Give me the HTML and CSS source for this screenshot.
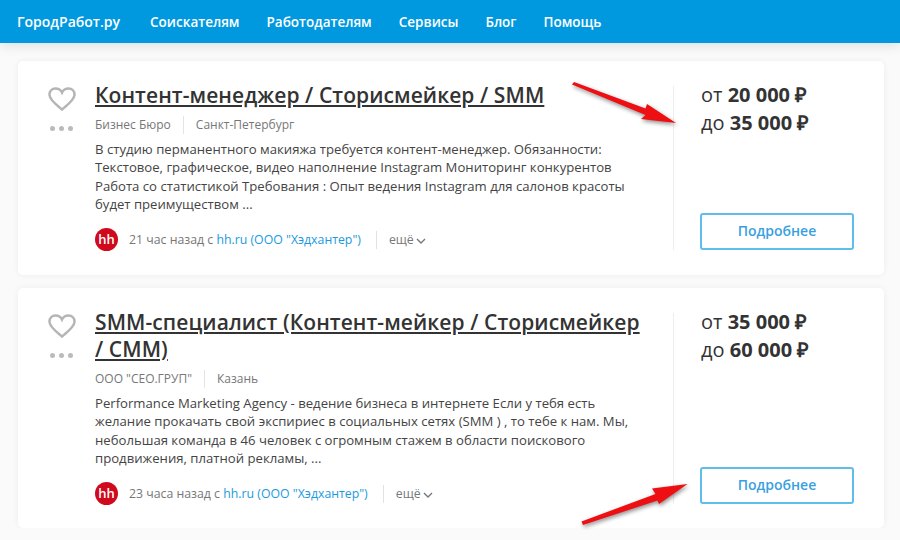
FILE: index.html
```html
<!DOCTYPE html>
<html lang="ru">
<head>
    <meta charset="UTF-8">
    <title>ГородРабот.ру</title>
    <link rel="stylesheet" href="styles.css">
</head>
<body>
    <header class="topbar">
        <a class="logo" href="#">ГородРабот.ру</a>
        <nav class="nav">
            <a href="#">Соискателям</a>
            <a href="#">Работодателям</a>
            <a href="#">Сервисы</a>
            <a href="#">Блог</a>
            <a href="#">Помощь</a>
        </nav>
    </header>

    <main class="list">
        <article class="card card-first">
            <div class="side">
                <svg class="heart" viewBox="0 0 28 24"><path d="M14 22.5C9 18 2 13.500 1.500 8 1.200 4 4 1.500 7.500 1.500 10.300 1.500 12.800 3 14 5.500 15.200 3 17.700 1.500 20.500 1.500 24 1.500 26.800 4 26.500 8 26 13.500 19 18 14 22.500Z"/></svg>
                <div class="dots"><i></i><i></i><i></i></div>
            </div>
            <div class="body">
                <h2 class="title"><a href="#">Контент-менеджер / Сторисмейкер / SMM</a></h2>
                <div class="meta"><span>Бизнес Бюро</span><span>Санкт-Петербург</span></div>
                <p class="desc">В студию перманентного макияжа требуется контент-менеджер. Обязанности: Текстовое, графическое, видео наполнение Instagram Мониторинг конкурентов Работа со статистикой Требования : Опыт ведения Instagram для салонов красоты будет преимуществом ...</p>
                <div class="source">
                    <span class="hh">hh</span>
                    <span class="ago">21 час назад с <a href="#">hh.ru (ООО "Хэдхантер")</a></span>
                    <span class="more">ещё <svg viewBox="0 0 10 6"><path d="M1 1l4 4 4-4"/></svg></span>
                </div>
            </div>
            <div class="aside">
                <div class="price">
                    <div>от <b>20 000 ₽</b></div>
                    <div>до <b>35 000 ₽</b></div>
                </div>
                <a class="btn" href="#">Подробнее</a>
            </div>
        </article>

        <article class="card card-second">
            <div class="side">
                <svg class="heart" viewBox="0 0 28 24"><path d="M14 22.5C9 18 2 13.500 1.500 8 1.200 4 4 1.500 7.500 1.500 10.300 1.500 12.800 3 14 5.500 15.200 3 17.700 1.500 20.500 1.500 24 1.500 26.800 4 26.500 8 26 13.500 19 18 14 22.500Z"/></svg>
                <div class="dots"><i></i><i></i><i></i></div>
            </div>
            <div class="body">
                <h2 class="title"><a href="#">SMM-специалист (Контент-мейкер / Сторисмейкер / СММ)</a></h2>
                <div class="meta"><span>ООО "СЕО.ГРУП"</span><span>Казань</span></div>
                <p class="desc">Performance Marketing Agency - ведение бизнеса в интернете Если у тебя есть желание прокачать свой экспириес в социальных сетях (SMM ) , то тебе к нам. Мы, небольшая команда в 46 человек с огромным стажем в области поискового продвижения, платной рекламы, ...</p>
                <div class="source">
                    <span class="hh">hh</span>
                    <span class="ago">23 часа назад с <a href="#">hh.ru (ООО "Хэдхантер")</a></span>
                    <span class="more">ещё <svg viewBox="0 0 10 6"><path d="M1 1l4 4 4-4"/></svg></span>
                </div>
            </div>
            <div class="aside">
                <div class="price">
                    <div>от <b>35 000 ₽</b></div>
                    <div>до <b>60 000 ₽</b></div>
                </div>
                <a class="btn" href="#">Подробнее</a>
            </div>
        </article>
    </main>

    <!-- red arrows drawn over the screenshot -->
    <svg class="arrow arrow-top" viewBox="0 0 110 50"><path d="M1 2.500 L3 0 L74.500 26.500 L76 22 L105 41 L70 37 L74.500 33Z"/></svg>
    <svg class="arrow arrow-bottom" viewBox="0 0 110 50"><path d="M0.500 41.500 L2 45 L76.500 20.500 L78 24 L106.500 4 L71 8.500 L74.500 14Z"/></svg>
</body>
</html>
```

FILE: styles.css
```css
* {
    box-sizing: border-box;
}
body {
    margin: 0;
    background-color: #fafafa;
    font-family: "Open Sans", sans-serif;
    color: #333;
    overflow: hidden;
}
a {
    text-decoration: none;
}
.topbar {
    height: 43px;
    display: flex;
    align-items: center;
    padding-left: 17px;
    background-color: #0099df;
    box-shadow: 0 2px 12px rgba(0, 0, 0, 0.12);
}
.logo,
.nav a {
    color: #fff;
    font-size: 13.500px;
    font-weight: 600;
}
.logo {
    margin-right: 30px;
    font-size: 14px;
}
.nav {
    display: flex;
    gap: 27px;
}
.list {
    padding: 18px 16px 0 18px;
    display: flex;
    flex-direction: column;
    gap: 13px;
}
.card {
    display: flex;
    background-color: #fff;
    border-radius: 5px;
    box-shadow: 0 0 6px rgba(0, 0, 0, 0.06);
    padding-top: 20px;
}
.card-first {
    height: 214px;
}
.card-second {
    height: 240px;
}
.side {
    width: 77px;
    flex-shrink: 0;
    padding: 6px 0 0 30px;
}
.heart {
    display: block;
    width: 28px;
    height: 24px;
    fill: none;
    stroke: #b5b5b5;
    stroke-width: 2.500;
}
.dots {
    display: flex;
    gap: 4px;
    margin: 15px 0 0 2px;
}
.dots i {
    width: 5px;
    height: 5px;
    border-radius: 50%;
    background-color: #bbb;
}
.body {
    width: 578px;
    flex-shrink: 0;
    padding-right: 32px;
}
.title {
    margin: 1px 0 0;
    font-size: 21px;
    font-weight: 600;
    line-height: 27px;
    letter-spacing: 0.080px;
}
.title a {
    color: #333;
    text-decoration: underline;
}
.meta {
    display: flex;
    margin-top: 7px;
    font-size: 12px;
    line-height: 18px;
    color: #777;
}
.meta span + span {
    margin-left: 12px;
    padding-left: 12px;
    border-left: 1px solid #e4e4e4;
}
.desc {
    margin: 6px 0 0;
    font-size: 13.150px;
    line-height: 18.300px;
    color: #444;
}
.source {
    display: flex;
    align-items: center;
    margin-top: 15px;
    font-size: 12.300px;
    color: #777;
}
.hh {
    width: 23px;
    height: 23px;
    margin-right: 11px;
    border-radius: 50%;
    background-color: #d0091c;
    color: #fff;
    font-size: 13px;
    font-weight: 600;
    line-height: 22px;
    text-align: center;
}
.ago a {
    color: #1a9ae0;
}
.more {
    display: flex;
    align-items: center;
    gap: 2px;
    margin-left: 15px;
    padding-left: 12px;
    border-left: 1px solid #dde3e8;
    line-height: 18px;
}
.more svg {
    width: 10px;
    height: 6px;
    margin-top: 2px;
    fill: none;
    stroke: #777;
    stroke-width: 1.400;
}
.aside {
    flex-grow: 1;
    height: 164px;
    margin-top: 5px;
    padding: 0 30px 0 26px;
    display: flex;
    flex-direction: column;
    justify-content: space-between;
    border-left: 1px solid #eee;
}
.card-second .aside {
    height: 191px;
}
.price {
    margin-top: -5px;
    padding-left: 1px;
    font-size: 20px;
    line-height: 28px;
    color: #333;
}
.price b {
    font-weight: 700;
}
.btn {
    display: block;
    height: 37px;
    border: 2px solid #5fbdec;
    border-radius: 3px;
    color: #3a9fe0;
    font-size: 14px;
    font-weight: 600;
    line-height: 31px;
    text-align: center;
}
.arrow {
    position: absolute;
    width: 110px;
    height: 50px;
    fill: #ee0f12;
    filter: drop-shadow(1px 2px 2px rgba(0, 0, 0, 0.45));
}
.arrow-top {
    left: 571px;
    top: 82px;
}
.arrow-bottom {
    left: 581px;
    top: 480px;
}
```
